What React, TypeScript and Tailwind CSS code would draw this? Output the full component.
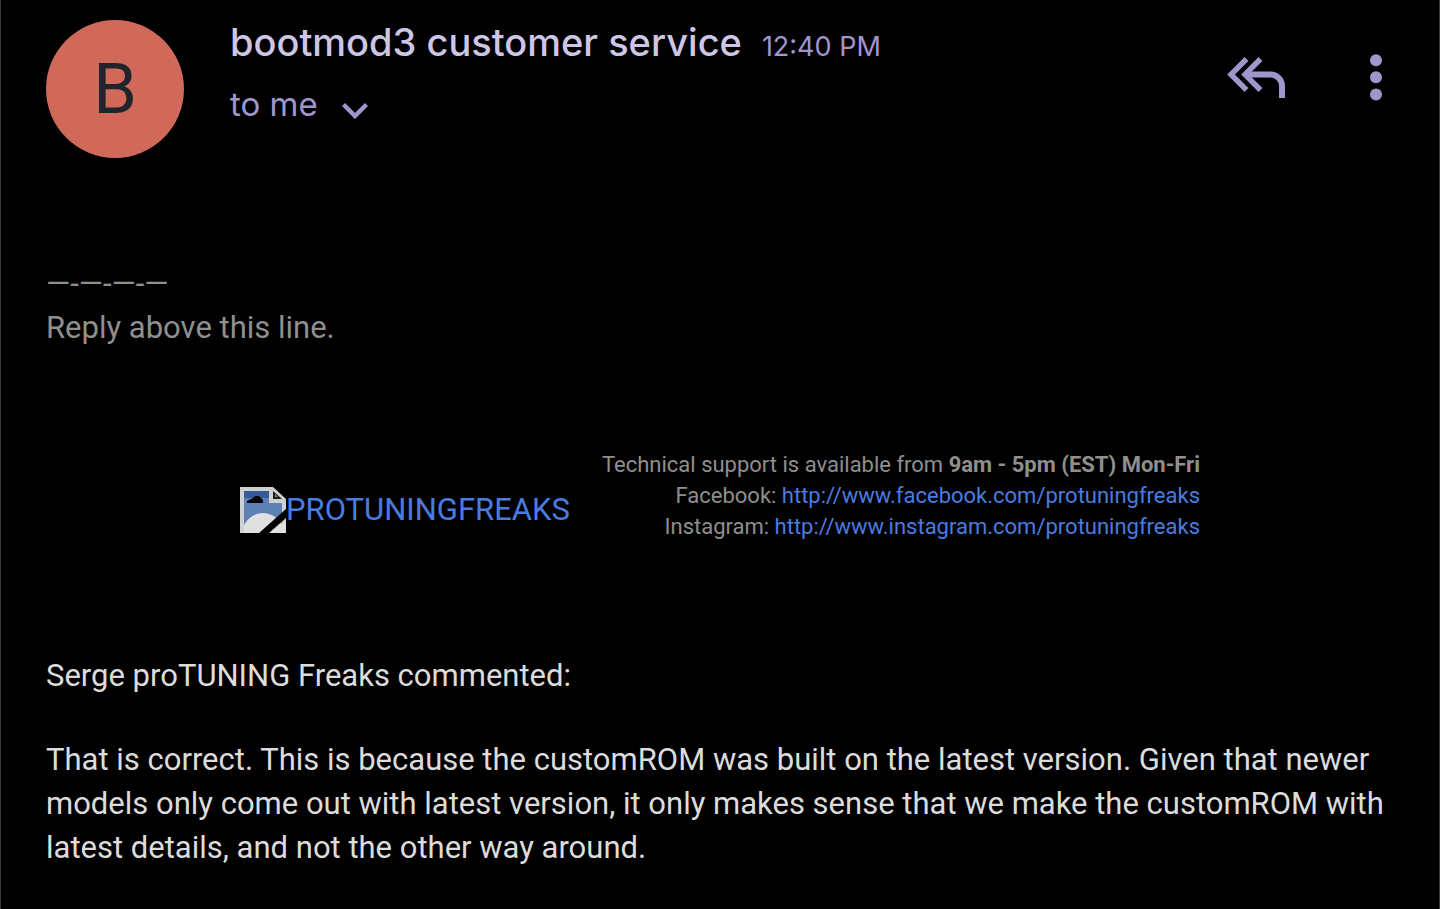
import React from 'react';

interface SocialLink {
  label: string;
  url: string;
}

const socialLinks: SocialLink[] = [
  { label: 'Facebook', url: 'http://www.facebook.com/protuningfreaks' },
  { label: 'Instagram', url: 'http://www.instagram.com/protuningfreaks' },
];

const ReplyAllIcon = () => (
  <svg viewBox="0 0 60 44" className="w-[60px] h-[44px]" fill="none" stroke="currentColor" strokeWidth="5.4" aria-hidden="true">
    <path d="M20.5 4 L5 19.5 L20.5 35" />
    <path d="M34.5 4 L19 19.5 L34.5 35" />
    <path d="M19.5 19.5 H44.5 A11.5 11.5 0 0 1 56 31 V43" strokeWidth="6" />
  </svg>
);

const MoreIcon = () => (
  <svg viewBox="0 0 12 48" className="w-[12px] h-[48px]" fill="currentColor" aria-hidden="true">
    <circle cx="6" cy="7.3" r="6" />
    <circle cx="6" cy="24.3" r="6" />
    <circle cx="6" cy="41.6" r="6" />
  </svg>
);

const BrokenImageIcon = () => (
  <svg viewBox="0 0 46 46" className="w-[46px] h-[46px] shrink-0" aria-hidden="true">
    <path d="M0 0 H33 L46 12 V46 H0 Z" fill="#cfd0d0" />
    <path d="M4 4 H29 V16 H42 V46 H4 Z" fill="#5f80b2" />
    <path d="M4 4 H29 V11 H4 Z" fill="#375a9b" />
    <path d="M7 16 V14 L13 11 L15 9 H19 L23 13 V16 Z" fill="#05070c" />
    <path d="M4 38 C8 31 15 26 23 26 C31 26 38 31 42 37 L46 34 V46 H4 Z" fill="#dfe0df" />
    <path d="M33 4 L42 12 H33 Z" fill="#1c1c1c" />
    <path d="M35 7 L38 10 H35 Z" fill="#8a8a8a" />
    <path d="M46 22 L19 46 H29 L46 31 Z" fill="#000" />
  </svg>
);

const EmailHeader = () => (
  <header className="flex items-start">
    <div className="flex items-center justify-center w-[138px] h-[138px] mt-5 rounded-full bg-[#d1695b] text-[#20242b] text-[70px] font-['Roboto',sans-serif]">
      B
    </div>
    <div className="flex-1 ml-[46px] pt-4 font-['Inter',sans-serif] text-[#a096cc]">
      <div className="flex items-baseline gap-5">
        <h1 className="text-[38px] leading-[52px] font-medium text-[#cdc6e6]">bootmod3 customer service</h1>
        <span className="text-[27px] leading-[52px]">12:40 PM</span>
      </div>
      <button type="button" className="flex items-center gap-6 text-[33px] leading-[62px]">
        to me
        <svg viewBox="0 0 26 18" className="w-[26px] h-[18px] mt-3" fill="none" stroke="currentColor" strokeWidth="4.4" aria-hidden="true">
          <path d="M1.5 3.5 L13 15 L24.5 3.5" />
        </svg>
      </button>
    </div>
    <div className="flex items-center gap-[84px] mt-[53px] mr-3 text-[#a096cc]">
      <button type="button" aria-label="Reply all">
        <ReplyAllIcon />
      </button>
      <button type="button" aria-label="More options">
        <MoreIcon />
      </button>
    </div>
  </header>
);

const SupportBanner = () => (
  <section className="flex items-center justify-between max-w-[960px] mx-auto mt-[99px] text-[#8f8f8f]">
    <a href="#protuningfreaks" className="flex items-center pt-7 text-[31px] leading-[44px] text-[#4a7ce0]">
      <BrokenImageIcon />
      PROTUNINGFREAKS
    </a>
    <div className="text-right text-[22px] leading-[31px]">
      <p>
        Technical support is available from <strong>9am - 5pm (EST) Mon-Fri</strong>
      </p>
      {socialLinks.map((link) => (
        <p key={link.label}>
          {link.label}: <a href={link.url} className="text-[#4a7ce0]">{link.url}</a>
        </p>
      ))}
    </div>
  </section>
);

const App = () => {
  return (
    <main className="min-h-screen bg-black border-x border-[#3c3c3c] px-[45px] pb-10 font-['Roboto',sans-serif]">
      <EmailHeader />
      <div className="mt-[104px] text-[31px] leading-[44px] text-[#8f8f8f]">
        <p>—-—-—-—</p>
        <p>Reply above this line.</p>
      </div>
      <SupportBanner />
      <div className="mt-28 text-[31px] leading-[44px] text-[#dcdcdc]">
        <p>Serge proTUNING Freaks commented:</p>
        <p className="mt-10">
          That is correct. This is because the customROM was built on the latest version. Given that newer models
          only come out with latest version, it only makes sense that we make the customROM with latest details,
          and not the other way around.
        </p>
      </div>
    </main>
  );
};

export default App;
